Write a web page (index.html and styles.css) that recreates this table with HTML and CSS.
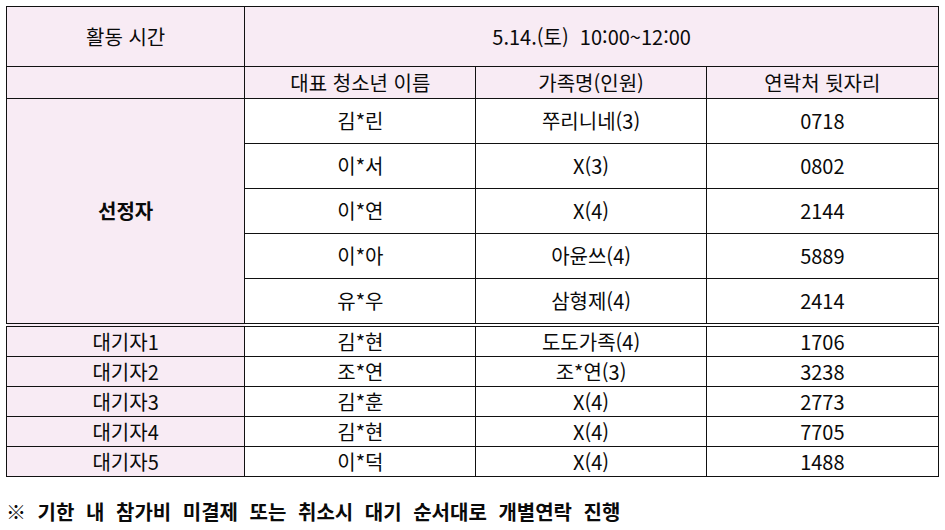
FILE: index.html
```html
<!DOCTYPE html>
<html lang="ko">
<head>
<meta charset="utf-8">
<link rel="stylesheet" href="styles.css">
</head>
<body>
<table class="sched">
  <colgroup>
    <col class="c1"><col class="c2"><col class="c3"><col class="c4">
  </colgroup>
  <tr class="top">
    <td class="pink">활동 시간</td>
    <td class="pink" colspan="3">5.14.(토) &nbsp;10:00~12:00</td>
  </tr>
  <tr class="head">
    <td class="pink"></td>
    <td class="pink">대표 청소년 이름</td>
    <td class="pink">가족명(인원)</td>
    <td class="pink">연락처 뒷자리</td>
  </tr>
  <tr class="sel">
    <td class="pink strong" rowspan="5">선정자</td>
    <td>김*린</td><td>쭈리니네(3)</td><td>0718</td>
  </tr>
  <tr class="sel"><td>이*서</td><td>X(3)</td><td>0802</td></tr>
  <tr class="sel"><td>이*연</td><td>X(4)</td><td>2144</td></tr>
  <tr class="sel"><td>이*아</td><td>아윤쓰(4)</td><td>5889</td></tr>
  <tr class="sel"><td>유*우</td><td>삼형제(4)</td><td>2414</td></tr>
  <tr class="wait first"><td class="pink">대기자1</td><td>김*현</td><td>도도가족(4)</td><td>1706</td></tr>
  <tr class="wait"><td class="pink">대기자2</td><td>조*연</td><td>조*연(3)</td><td>3238</td></tr>
  <tr class="wait"><td class="pink">대기자3</td><td>김*훈</td><td>X(4)</td><td>2773</td></tr>
  <tr class="wait"><td class="pink">대기자4</td><td>김*현</td><td>X(4)</td><td>7705</td></tr>
  <tr class="wait"><td class="pink">대기자5</td><td>이*덕</td><td>X(4)</td><td>1488</td></tr>
</table>
<p class="note">※ 기한 내 참가비 미결제 또는 취소시 대기 순서대로 개별연락 진행</p>
</body>
</html>
```
FILE: styles.css
```css
html, body {
  margin: 0;
  padding: 0;
  background: #ffffff;
}
body {
  padding: 6px 0 0 6px;
  font-family: "Noto Sans CJK KR", "Noto Sans", sans-serif;
  color: #0a0a0a;
}
.sched {
  border-collapse: collapse;
  table-layout: fixed;
  width: 933px;
  font-size: 20px;
}
.c1 { width: 238px; }
.c2 { width: 231px; }
.c3 { width: 230px; }
.c4 { width: 232px; }
.sched td {
  border: 1.5px solid #111111;
  text-align: center;
  vertical-align: middle;
  padding: 0;
  line-height: 1;
}
.pink { background: #f8ebf4; }
.strong { font-weight: 700; }
.top td { height: 59px; }
.head td { height: 31px; }
.sel td { height: 44px; }
.wait td { height: 29px; }
.wait.first td { border-top: 4px double #111111; }
.note {
  margin: 25px 0 0 0;
  font-size: 20px;
  font-weight: 700;
  word-spacing: 6px;
  line-height: 1;
}
```
